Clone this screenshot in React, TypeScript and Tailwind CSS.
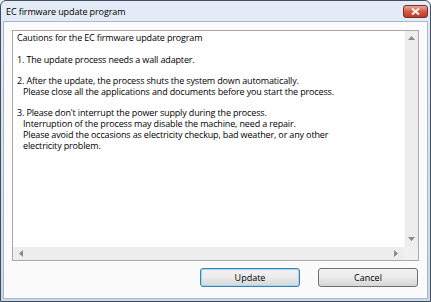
import React from "react";

const font = { fontFamily: '"Open Sans", "Noto Sans", sans-serif' };

function Arrow({ dir }: { dir: "up" | "down" | "left" | "right" }) {
  const pts: Record<string, string> = {
    up: "0,4 3.5,0 7,4",
    down: "0,0 3.5,4 7,0",
    left: "4,0 0,3.5 4,7",
    right: "0,0 4,3.5 0,7",
  };
  const vert = dir === "up" || dir === "down";
  return (
    <svg width={vert ? 7 : 4} height={vert ? 4 : 7} viewBox={vert ? "0 0 7 4" : "0 0 4 7"}>
      <polygon points={pts[dir]} fill="#8a8a8a" />
    </svg>
  );
}

export default function App() {
  return (
    <div
      className="w-[431px] h-[302px] bg-gradient-to-b from-[#e3ecf6] via-[#d4e1ef] to-[#c9d9eb] border border-[#3f4d5c] rounded-t-[6px] flex flex-col overflow-hidden"
      style={font}
    >
      <div className="h-[20px] flex items-center justify-between pl-[5px] pr-[2px] shrink-0">
        <span className="text-[9px] tracking-[-0.1px] text-black leading-none">EC firmware update program</span>
        <div className="w-[25px] h-[13px] rounded-[3px] border border-[#7a2d22] bg-gradient-to-b from-[#e9a898] via-[#d25a44] to-[#c23a22] flex items-center justify-center mt-[1px]">
          <svg width="9" height="7" viewBox="0 0 9 7">
            <path d="M1 0.5 L8 6.5 M8 0.5 L1 6.5" stroke="#fff" strokeWidth="1.8" />
          </svg>
        </div>
      </div>
      <div className="flex-1 mx-[2px] mb-[2px] bg-[#fbfbfb] border border-[#a8b8cb] flex flex-col pt-[8px] px-[8px]">
        <div className="h-[231px] border border-[#a9a9a9] bg-white flex flex-col">
          <div className="flex-1 flex min-h-0">
            <div className="flex-1 pl-[4px] pt-[2px] text-[9px] tracking-[-0.15px] leading-[10.75px] text-black whitespace-pre">
              <div>Cautions for the EC firmware update program</div>
              <div>&nbsp;</div>
              <div>1. The update process needs a wall adapter.</div>
              <div>&nbsp;</div>
              <div>2. After the update, the process shuts the system down automatically.</div>
              <div className="pl-[6px]">Please close all the applications and documents before you start the process.</div>
              <div>&nbsp;</div>
              <div>3. Please don't interrupt the power supply during the process.</div>
              <div className="pl-[6px]">Interruption of the process may disable the machine, need a repair.</div>
              <div className="pl-[6px]">Please avoid the occasions as electricity checkup, bad weather, or any other</div>
              <div className="pl-[6px]">electricity problem.</div>
            </div>
            <div className="w-[14px] bg-[#ededed] border-l border-[#f6f6f6] flex flex-col items-center justify-between pt-[5px] pb-[6px]">
              <Arrow dir="up" />
              <Arrow dir="down" />
            </div>
          </div>
          <div className="h-[13px] flex shrink-0">
            <div className="flex-1 bg-[#ededed] flex items-center justify-between px-[6px]">
              <Arrow dir="left" />
              <Arrow dir="right" />
            </div>
            <div className="w-[14px] bg-[#f0f0f0]" />
          </div>
        </div>
        <div className="flex justify-end gap-[18px] mt-[7px] pr-[1px]">
          <button className="w-[100px] h-[19px] rounded-[3px] border border-[#3c7fb1] bg-gradient-to-b from-[#f2f2f2] via-[#ebebeb] to-[#d6d6d6] text-[9px] text-black leading-none flex items-center justify-center shadow-[inset_0_0_0_1px_#9ed8f2]">
            <span className="px-[1px]">Update</span>
          </button>
          <button className="w-[100px] h-[19px] rounded-[3px] border border-[#707070] bg-gradient-to-b from-[#f2f2f2] via-[#ebebeb] to-[#d6d6d6] text-[9px] text-black leading-none flex items-center justify-center">
            Cancel
          </button>
        </div>
      </div>
    </div>
  );
}
